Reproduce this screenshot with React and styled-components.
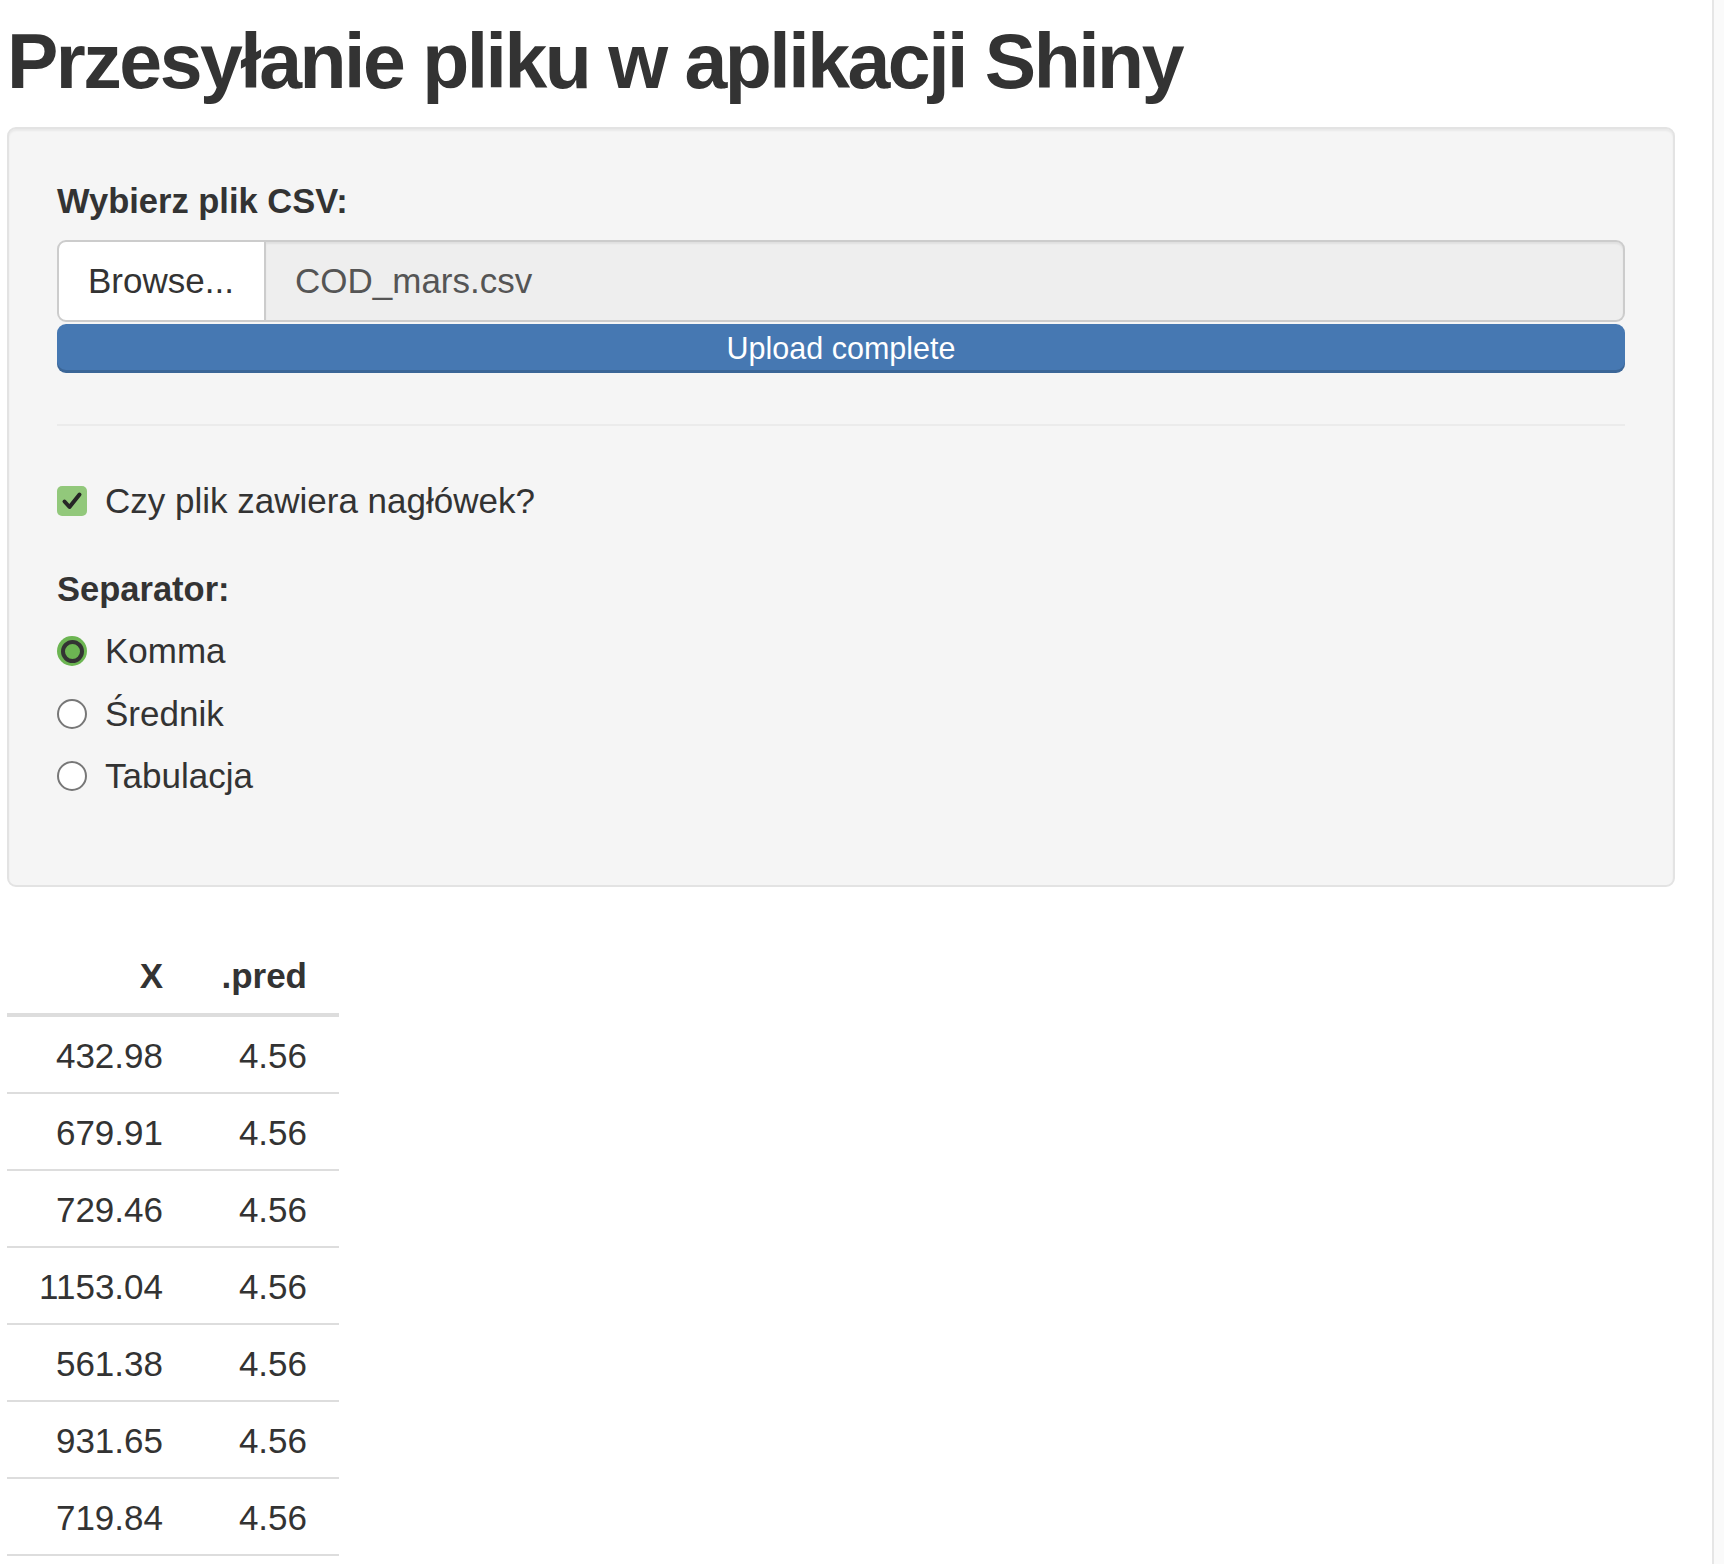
import React from "react";
import styled, { createGlobalStyle } from "styled-components";

const GlobalStyle = createGlobalStyle`
  html, body {
    margin: 0;
    padding: 0;
    background: #fff;
    overflow: hidden;
  }
  body {
    font-family: "Liberation Sans", Arial, Helvetica, sans-serif;
    font-size: 35px;
    line-height: 48px;
    color: #333;
  }
`;

const rows = [
  ["432.98", "4.56"],
  ["679.91", "4.56"],
  ["729.46", "4.56"],
  ["1153.04", "4.56"],
  ["561.38", "4.56"],
  ["931.65", "4.56"],
  ["719.84", "4.56"],
];

const separators = [
  { label: "Komma", checked: true },
  { label: "Średnik", checked: false },
  { label: "Tabulacja", checked: false },
];

export default function App() {
  return (
    <>
      <GlobalStyle />
      <Shell>
        <Main>
          <Title>Przesyłanie pliku w aplikacji Shiny</Title>

          <WellPanel>
            <FieldLabel>Wybierz plik CSV:</FieldLabel>
            <FileInputGroup>
              <BrowseButton>Browse...</BrowseButton>
              <FileName>COD_mars.csv</FileName>
            </FileInputGroup>
            <ProgressBar>Upload complete</ProgressBar>

            <Divider />

            <CheckRow>
              <CheckBox>
                <svg width="30" height="30" viewBox="0 0 30 30">
                  <path
                    d="M7.5 15.5 L12.5 21 L22.5 8.5"
                    fill="none"
                    stroke="#262626"
                    strokeWidth="4"
                    strokeLinecap="round"
                    strokeLinejoin="round"
                  />
                </svg>
              </CheckBox>
              <OptionText>Czy plik zawiera nagłówek?</OptionText>
            </CheckRow>

            <SectionLabel>Separator:</SectionLabel>
            <RadioList>
              {separators.map((s) => (
                <RadioRow key={s.label}>
                  <RadioDot $checked={s.checked} />
                  <OptionText>{s.label}</OptionText>
                </RadioRow>
              ))}
            </RadioList>
          </WellPanel>

          <DataTable>
            <thead>
              <tr>
                <Th $w={188}>X</Th>
                <Th $w={144}>.pred</Th>
              </tr>
            </thead>
            <tbody>
              {rows.map((r, i) => (
                <tr key={i}>
                  <Td>{r[0]}</Td>
                  <Td>{r[1]}</Td>
                </tr>
              ))}
            </tbody>
          </DataTable>
        </Main>
        <ScrollTrack />
      </Shell>
    </>
  );
}

const Shell = styled.div`
  display: flex;
  min-height: 100vh;
`;

const Main = styled.main`
  flex: 1;
  padding: 19px 37px 0 7px;
`;

const ScrollTrack = styled.div`
  width: 10px;
  flex-shrink: 0;
  background: #fafafa;
  border-left: 2px solid #e6e6e6;
`;

const Title = styled.h1`
  margin: 0 0 23px;
  font-size: 77px;
  line-height: 85px;
  font-weight: 700;
  letter-spacing: -2.5px;
  color: #333;
  white-space: nowrap;
`;

const WellPanel = styled.section`
  box-sizing: border-box;
  width: 1668px;
  padding: 48px 48px 85px;
  background: #f5f5f5;
  border: 2px solid #e3e3e3;
  border-radius: 9px;
  box-shadow: inset 0 2px 2px rgba(0, 0, 0, 0.05);
`;

const FieldLabel = styled.div`
  font-size: 34.5px;
  font-weight: 700;
  margin-bottom: 15px;
`;

const SectionLabel = styled(FieldLabel)`
  margin-top: 40px;
  margin-bottom: 14px;
`;

const FileInputGroup = styled.div`
  display: flex;
  height: 82px;
  box-sizing: border-box;
`;

const BrowseButton = styled.div`
  box-sizing: border-box;
  width: 209px;
  display: flex;
  align-items: center;
  padding-left: 29px;
  background: #fff;
  border: 2px solid #ccc;
  border-radius: 9px 0 0 9px;
  color: #333;
`;

const FileName = styled.div`
  flex: 1;
  box-sizing: border-box;
  display: flex;
  align-items: center;
  padding-left: 29px;
  background: #eee;
  border: 2px solid #ccc;
  border-left: none;
  border-radius: 0 9px 9px 0;
  box-shadow: inset 0 2px 2px rgba(0, 0, 0, 0.06);
  color: #555;
`;

const ProgressBar = styled.div`
  margin-top: 2px;
  height: 49px;
  line-height: 49px;
  background: #4678b2;
  border-radius: 9px;
  box-shadow: inset 0 -3px 0 rgba(0, 0, 0, 0.15);
  color: #fff;
  font-size: 30.5px;
  text-align: center;
`;

const Divider = styled.hr`
  margin: 51px 0 51px;
  border: 0;
  border-top: 2px solid #ebebeb;
`;

const CheckRow = styled.label`
  display: flex;
  align-items: center;
  gap: 18px;
  height: 48px;
`;

const CheckBox = styled.span`
  width: 30px;
  height: 30px;
  flex-shrink: 0;
  display: inline-flex;
  background: #92c87b;
  border-radius: 5px;
`;

const OptionText = styled.span`
  color: #333;
`;

const RadioList = styled.div`
  display: flex;
  flex-direction: column;
  gap: 14.5px;
`;

const RadioRow = styled.label`
  display: flex;
  align-items: center;
  gap: 18px;
  height: 48px;
`;

const RadioDot = styled.span`
  box-sizing: border-box;
  width: 30px;
  height: 30px;
  flex-shrink: 0;
  border-radius: 50%;
  display: inline-flex;
  align-items: center;
  justify-content: center;
  background: ${(p) => (p.$checked ? "#6cb552" : "#fff")};
  border: ${(p) => (p.$checked ? "none" : "2px solid #777")};
  &::after {
    content: "";
    display: ${(p) => (p.$checked ? "block" : "none")};
    box-sizing: border-box;
    width: 23px;
    height: 23px;
    border-radius: 50%;
    border: 4px solid #333;
    background: #6cb552;
  }
`;

const DataTable = styled.table`
  margin-top: 50px;
  border-collapse: collapse;
  table-layout: fixed;
`;

const Th = styled.th`
  box-sizing: border-box;
  width: ${(p) => p.$w}px;
  padding: 15px 32px 13px 0;
  text-align: right;
  font-weight: 700;
  line-height: 48px;
  border-bottom: 4px solid #ddd;
`;

const Td = styled.td`
  padding: 15px 32px 12px 0;
  text-align: right;
  line-height: 48px;
  border-bottom: 2px solid #ddd;
`;
